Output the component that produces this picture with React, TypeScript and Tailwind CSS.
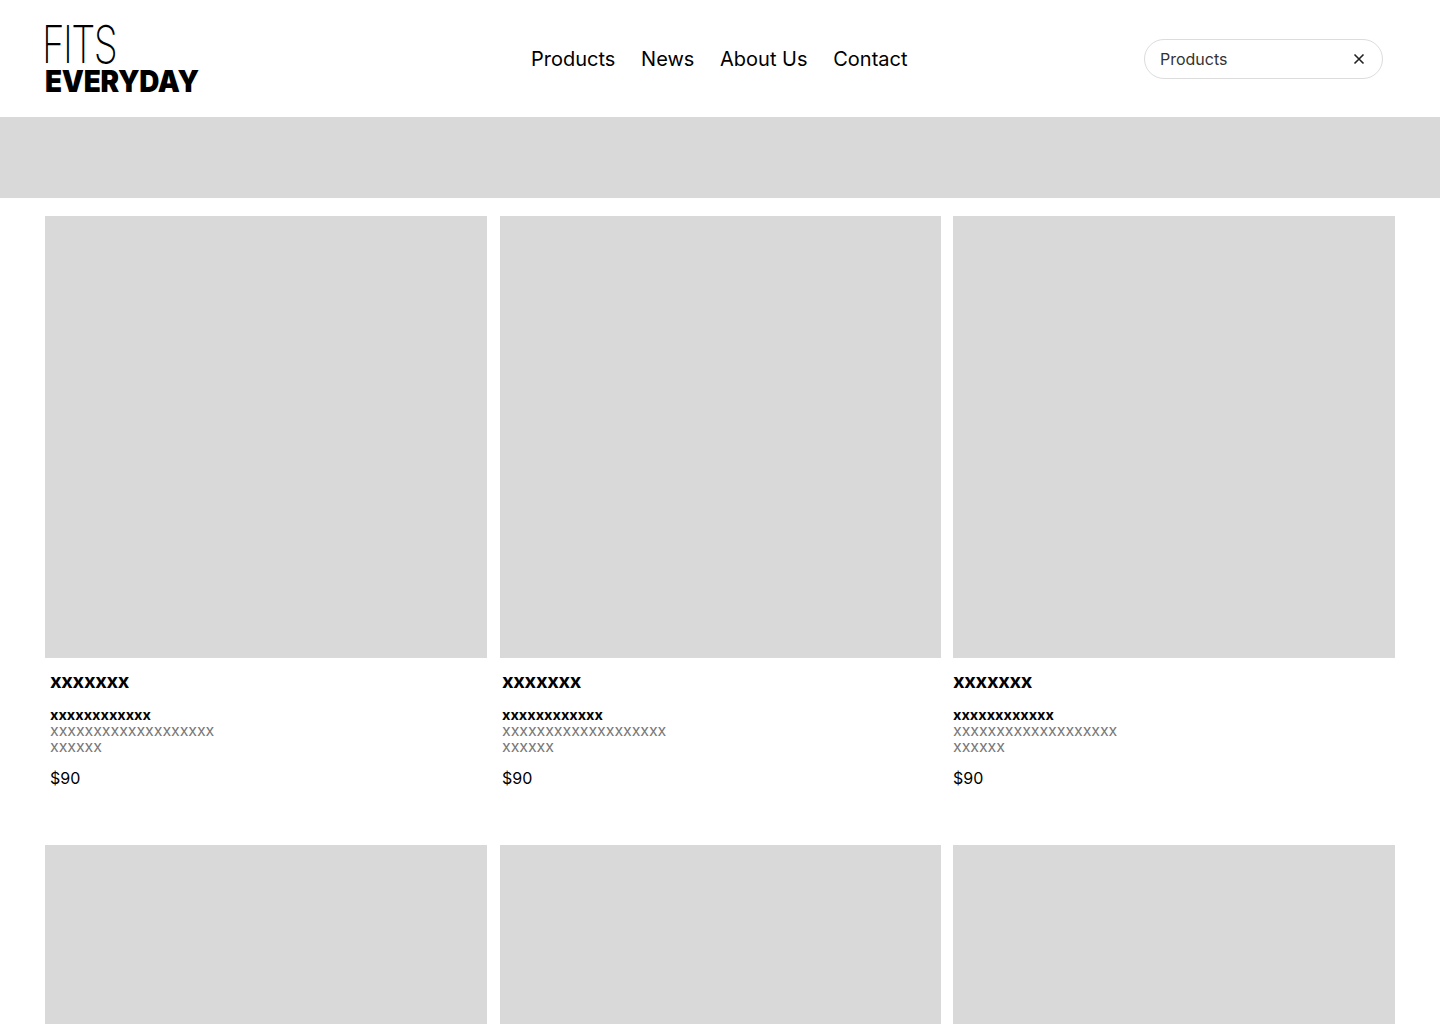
import React from "react";

const pads = ["pl-[5px]", "pl-[2.5px]", "pl-0"];

function Card({ pad }: { pad: string }) {
  return (
    <div className="h-[629px]">
      <div className="h-[442px] bg-[#d9d9d9]" />
      <div className={pad}>
        <div className="mt-[13px] text-[20px] leading-[20px] font-bold tracking-[-0.015em] text-black">xxxxxxx</div>
        <div className="mt-[16px] text-[14.5px] leading-[16px] font-bold text-black">xxxxxxxxxxxx</div>
        <div className="mt-[-1px] text-[16px] leading-[16px] tracking-[-0.09px] text-[#777777]">
          <div>xxxxxxxxxxxxxxxxxxx</div>
          <div>xxxxxx</div>
        </div>
        <div className="mt-[14px] text-[16px] leading-[20px] text-black">$90</div>
      </div>
    </div>
  );
}

export default function App() {
  return (
    <div className="h-[1024px] overflow-hidden bg-white font-['Inter',sans-serif]">
      <header className="h-[117px] flex items-center pl-[45px] pr-[57px]">
        <div className="flex flex-col w-[486px] h-[70px] mt-[2px]">
          <span className="block origin-top-left scale-x-[0.74] ml-[-3px] text-[52px] leading-[40px] font-extralight tracking-[-0.04em] text-black whitespace-nowrap">FITS</span>
          <span className="block origin-top-left scale-x-[0.93] mt-[3px] text-[30px] leading-[27px] font-black tracking-[-0.01em] text-black whitespace-nowrap">EVERYDAY</span>
        </div>
        <nav className="flex items-center gap-[25.7px] text-[20px] leading-[24px] text-black">
          <span>Products</span>
          <span>News</span>
          <span>About Us</span>
          <span>Contact</span>
        </nav>
        <div className="ml-auto mt-[1px] w-[239px] h-[40px] rounded-full border border-[#dcdcdc] flex items-center justify-between pl-[15px] pr-[17px] text-[16px] text-[#333333]">
          <span>Products</span>
          <svg width="12" height="12" viewBox="0 0 12 12" fill="none" stroke="#222222" strokeWidth="1.6">
            <path d="M1.5 1.5 L10.5 10.5 M10.5 1.5 L1.5 10.5" />
          </svg>
        </div>
      </header>
      <div className="h-[81px] bg-[#d9d9d9]" />
      <main className="grid grid-cols-[442px_441px_442px] justify-between pl-[45px] pr-[45px] pt-[18px]">
        {[0, 1, 2, 0, 1, 2].map((p, i) => (
          <Card key={i} pad={pads[p]} />
        ))}
      </main>
    </div>
  );
}
